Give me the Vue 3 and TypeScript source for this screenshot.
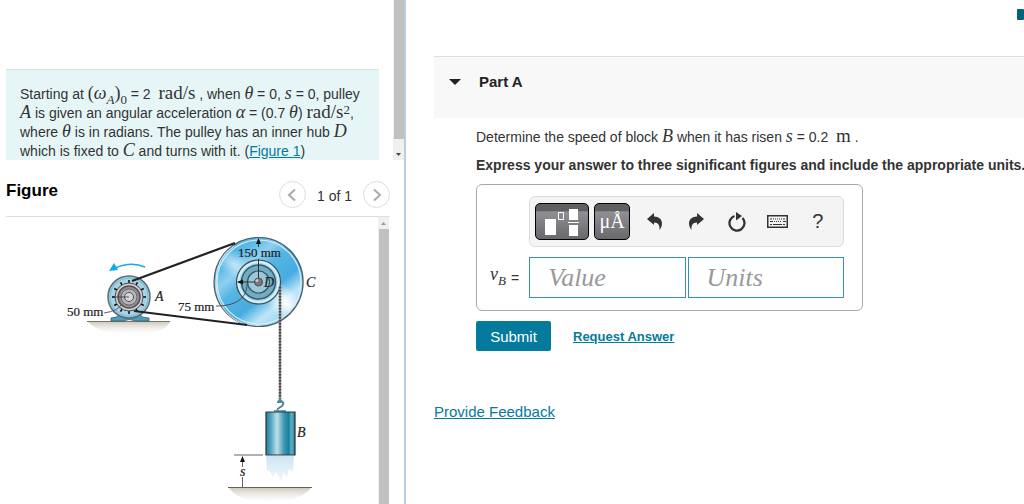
<script setup lang="ts">
import { ref } from 'vue'

const value = ref('')
const units = ref('')
const open = ref(true)

interface Mark {
  x1: number
  y1: number
  x2: number
  y2: number
}

const bolts: Mark[] = Array.from({ length: 12 }, (_, i) => {
  const a = (i * Math.PI) / 6
  const at = (r: number, f: (n: number) => number) => Math.round(r * f(a) * 10) / 10
  return {
    x1: 129 + at(14, Math.cos),
    y1: 297 + at(14, Math.sin),
    x2: 129 + at(17, Math.cos),
    y2: 297 + at(17, Math.sin),
  }
})
</script>

<template>
  <div class="page">
    <aside class="left">
      <section class="problem">
        <div class="problem-scroll">
          <p class="statement">
            <span class="line">Starting at <span class="m">(<i>ω</i><sub><i>A</i></sub>)<sub>0</sub></span> = 2 &nbsp;<span class="m unit">rad/s</span> , when <i class="m">θ</i> = 0, <i class="m">s</i> = 0, pulley</span>
            <span class="line"><i class="m">A</i> is given an angular acceleration <i class="m">α</i> = (0.7 <i class="m">θ</i>) <span class="m unit">rad/s<sup>2</sup></span>,</span>
            <span class="line">where <i class="m">θ</i> is in radians. The pulley has an inner hub <i class="m">D</i></span>
            <span class="line">which is fixed to <i class="m">C</i> and turns with it. (<a href="#figure">Figure 1</a>)</span>
          </p>
        </div>
        <div class="bar bar-top" aria-hidden="true">
          <span class="thumb"></span>
          <svg class="arrow" viewBox="0 0 11 21"><path d="M3 14h5L5.500 17z" fill="#444" /></svg>
        </div>
      </section>

      <header class="figure-head">
        <h2>Figure</h2>
        <nav class="pager" aria-label="Figure pages">
          <button type="button" class="round" aria-label="Previous figure">
            <svg width="12" height="14" viewBox="0 0 12 14"><path d="M9 1.500 3 7l6 5.500" /></svg>
          </button>
          <span class="count">1 of 1</span>
          <button type="button" class="round" aria-label="Next figure">
            <svg width="12" height="14" viewBox="0 0 12 14"><path d="M3 1.500 9 7l-6 5.500" /></svg>
          </button>
        </nav>
      </header>

      <section id="figure" class="figure-body">
        <svg class="drawing" viewBox="0 217 378 287" role="img" aria-label="Pulley A driving pulley C, whose hub D lifts block B">
          <defs>
            <linearGradient id="disc" x1="0.1" y1="0" x2="0.9" y2="1">
              <stop offset="0" stop-color="#49b0e3" />
              <stop offset="0.2" stop-color="#5bb9e8" />
              <stop offset="0.32" stop-color="#8fd0f0" />
              <stop offset="0.43" stop-color="#55b5e5" />
              <stop offset="0.62" stop-color="#48ace0" />
              <stop offset="0.76" stop-color="#bfe5f8" />
              <stop offset="0.88" stop-color="#9fd7f3" />
              <stop offset="1" stop-color="#49aee2" />
            </linearGradient>
            <radialGradient id="glow">
              <stop offset="0" stop-color="#fff" stop-opacity="0.95" />
              <stop offset="1" stop-color="#fff" stop-opacity="0" />
            </radialGradient>
            <linearGradient id="block">
              <stop offset="0" stop-color="#267f9c" />
              <stop offset="0.15" stop-color="#4aa0b9" />
              <stop offset="0.38" stop-color="#c1dfeb" />
              <stop offset="0.62" stop-color="#3e98b2" />
              <stop offset="0.78" stop-color="#16809c" />
              <stop offset="0.88" stop-color="#60b0c5" />
              <stop offset="1" stop-color="#267c96" />
            </linearGradient>
            <linearGradient id="trail" x2="0" y2="1">
              <stop offset="0" stop-color="#cce5f2" />
              <stop offset="1" stop-color="#e3f2f9" stop-opacity="0.6" />
            </linearGradient>
            <linearGradient id="soil" x2="0" y2="1">
              <stop offset="0" stop-color="#cfcabc" />
              <stop offset="1" stop-color="#f6f4ef" stop-opacity="0" />
            </linearGradient>
            <clipPath id="rim"><circle cx="259" cy="282" r="44" /></clipPath>
          </defs>

          <path d="M88 322h82q-5 10-28 12-37 4-54-12z" fill="url(#soil)" />
          <path d="M87 321.500h83" stroke="#77746c" stroke-width="1.200" />
          <path d="M111 321v-3l6-1 4-6h17l4 6 7 1v3h-13q-7-3-13 0z" fill="#4f9db9" stroke="#345b6a" stroke-width="0.800" />
          <circle cx="129" cy="297" r="21" fill="#a7d3e6" stroke="#526e7a" stroke-width="1.500" />
          <circle cx="129" cy="297" r="19" fill="none" stroke="#7eb4cc" />
          <path v-for="(b, i) in bolts" :key="i" :d="`M${b.x1} ${b.y1}L${b.x2} ${b.y2}`" stroke="#111" stroke-width="1.600" />
          <circle cx="129" cy="297" r="14" fill="#d4d2d1" stroke="#4d4b4c" />
          <circle cx="129" cy="297" r="11" fill="#918f92" stroke="#565357" stroke-width="1.500" />
          <circle cx="129" cy="297" r="8" fill="#b7b5b8" stroke="#6c6a6e" />
          <circle cx="129" cy="297" r="4.500" fill="#d8d7da" stroke="#555358" />
          <path d="M113 297h16" stroke="#333" stroke-width="0.800" />
          <path d="M104 313q14-2 18-9" fill="none" stroke="#555" stroke-width="0.900" />
          <path d="M145 267q-14-6-30 1" fill="none" stroke="#16a9e8" stroke-width="1.500" />
          <path d="m109 271 5-8 4 7z" fill="#16a9e8" />

          <circle cx="259" cy="282" r="45" fill="url(#disc)" />
          <g clip-path="url(#rim)">
            <ellipse cx="234" cy="264" rx="22" ry="12" transform="rotate(35 234 264)" fill="url(#glow)" opacity="0.6" />
            <ellipse cx="286" cy="303" rx="28" ry="15" transform="rotate(42 286 303)" fill="url(#glow)" />
          </g>
          <circle cx="259" cy="282" r="42" fill="none" stroke="#d2edfa" stroke-width="1.200" />
          <circle cx="258.500" cy="282" r="44.500" fill="none" stroke="#505d64" stroke-width="1.200" />
          <path d="M234 246q-18 11-18 36c0 22 12 37 31 43" fill="none" stroke="#e5eef1" />
          <circle cx="258.500" cy="282" r="22" fill="#a9d4e5" stroke="#3a4b54" stroke-width="1.200" />
          <circle cx="258.500" cy="282" r="20" fill="none" stroke="#d9eff8" stroke-width="2" />
          <circle cx="258.500" cy="282" r="17" fill="#71adc2" stroke="#315e70" stroke-width="1.500" />
          <circle cx="258.500" cy="282" r="11" fill="#9ac8d9" stroke="#34535f" stroke-width="1.200" />
          <path d="M258.500 240v7m0 12v23M238 282h18" stroke="#222" stroke-width="0.900" />
          <path d="m258.500 238 2.500 6h-5zM237 282l6-2.500v5z" fill="#111" />
          <path d="M216 306c19 0 31-7 31-22" fill="none" stroke="#444" stroke-width="0.900" />
          <circle cx="258.500" cy="282" r="4" fill="#77787a" stroke="#4c4c4e" />
          <circle cx="257" cy="280.500" r="1.500" fill="#c8c8ca" />

          <path d="m132 281 103-38M134 311l113 14" fill="none" stroke="#222" stroke-width="2.200" />
          <path d="M280 287v113" stroke="#8c8888" stroke-width="2.400" />
          <path d="M280 287v113" stroke="#474444" stroke-width="2.400" stroke-dasharray="1.500 1.500" />

          <path d="M280 398v5m-2 0q0-3 3-2 4 2 1 5l-3 2q-3 2 0 3" fill="none" stroke="#4b899b" stroke-width="2" />
          <path d="M274 410h12v2h-12z" fill="#60a7b8" />
          <path d="M266 412h29v43h-29z" fill="url(#block)" stroke="#28343a" stroke-width="1.200" />
          <path d="M266 456h28l-1 16-4-3-2 8-4-5-1 10-6-10-3 5-4-7-2 2z" fill="url(#trail)" />

          <path d="M234 455h29M242.500 457v10m0 10v10" stroke="#555" stroke-width="0.900" />
          <path d="m242.500 456 2.500 6h-5z" fill="#111" />
          <path d="M229 488h82q-10 13-42 15-29 0-40-15z" fill="url(#soil)" />
          <path d="M228 487.500h84" stroke="#65625c" stroke-width="1.200" />

          <g class="labels">
            <text x="238" y="257">150 mm</text>
            <text x="178" y="311">75 mm</text>
            <text x="67" y="316">50 mm</text>
            <text x="155" y="301" class="it">A</text>
            <text x="306" y="287" class="it">C</text>
            <text x="264" y="287" class="it">D</text>
            <text x="297" y="437" class="it">B</text>
            <text x="240" y="476" class="it">s</text>
          </g>
        </svg>
        <div class="bar bar-figure" aria-hidden="true">
          <svg class="arrow" viewBox="0 0 11 12"><path d="M3 8h5L5.500 5z" fill="#999" /></svg>
          <span class="thumb"></span>
        </div>
      </section>
    </aside>

    <main class="right">
      <span class="flag" aria-hidden="true"></span>
      <header class="part">
        <button type="button" class="toggle" :aria-expanded="open" @click="open = !open">
          <svg width="12" height="8" viewBox="0 0 12 8" aria-hidden="true"><path d="M0 1h12L6 7z" fill="#222" /></svg>
          <span>Part A</span>
        </button>
      </header>

      <div v-show="open" class="question">
        <p class="ask">Determine the speed of block <i class="m">B</i> when it has risen <i class="m">s</i> = 0.2 &nbsp;<span class="m unit">m</span> .</p>
        <p class="hint">Express your answer to three significant figures and include the appropriate units.</p>

        <form class="answer" @submit.prevent>
          <div class="entry">
            <div class="tools" role="toolbar" aria-label="Math tools">
              <button type="button" class="dark wide" aria-label="Templates">
                <svg width="36" height="30" viewBox="0 0 36 30">
                  <path d="M1 12h11v16H1zM25 2h9v11h-9zM25 18h9v11h-9zM24 15h11v1H24z" fill="#fff" />
                  <path d="M14.500 5.500h5v7h-5z" fill="none" stroke="#fff" />
                </svg>
              </button>
              <button type="button" class="dark narrow" aria-label="Units and symbols">μÅ</button>
              <button type="button" class="plain" aria-label="Undo">
                <svg width="16" height="18" viewBox="0 0 16 18"><path d="M0 6 7 0v3.500c5 0 8 3 8 7 0 2.500-1 4.500-2.500 6.500.5-4-1-7.500-5.500-7.500V12z" fill="#333" /></svg>
              </button>
              <button type="button" class="plain" aria-label="Redo">
                <svg width="16" height="18" viewBox="0 0 16 18"><path d="M16 6 9 0v3.500c-5 0-8 3-8 7 0 2.500 1 4.500 2.500 6.500-.5-4 1-7.500 5.500-7.500V12z" fill="#333" /></svg>
              </button>
              <button type="button" class="plain" aria-label="Reset">
                <svg width="18" height="20" viewBox="0 0 18 20"><path d="M6.500 4A7.500 7.500 0 1 0 14.500 6" fill="none" stroke="#333" stroke-width="2.300" /><path d="m8 0 6 4-6 4.500z" fill="#333" /></svg>
              </button>
              <button type="button" class="plain" aria-label="Keyboard">
                <svg width="21" height="13" viewBox="0 0 21 13"><path d="M.75.750h19.500v11.500H.75z" fill="none" stroke="#333" stroke-width="1.500" /><path d="M3 4h2m1 0h1m1 0h1m1 0h1m1 0h1m1 0h1m1 0h2M3 6.500h3m1 0h1m1 0h1m1 0h1m1 0h1m2 0h3M3 9.500h2m1 0h9m1 0h2" stroke="#333" stroke-width="1.200" /></svg>
              </button>
              <button type="button" class="plain help" aria-label="Help">?</button>
            </div>
            <label class="symbol" for="value"><span class="m"><i>v</i><sub><i>B</i></sub></span> =</label>
            <div class="fields">
              <input id="value" v-model="value" type="text" placeholder="Value" />
              <input v-model="units" type="text" placeholder="Units" aria-label="Units" />
            </div>
          </div>
          <div class="actions">
            <button type="submit" class="submit">Submit</button>
            <a href="#request" class="request">Request Answer</a>
          </div>
        </form>
      </div>

      <a href="#feedback" class="feedback">Provide Feedback</a>
    </main>
  </div>
</template>

<style>
body {
  margin: 0;
  background: #fff;
}
</style>

<style scoped>
* {
  box-sizing: border-box;
}
.page {
  display: grid;
  grid-template-columns: 406fr 618fr;
  min-height: 100vh;
  font-family: "Liberation Sans", Arial, sans-serif;
  font-size: 14px;
  color: #333;
}
button {
  font: inherit;
  color: inherit;
  border: 0;
  padding: 0;
  background: none;
  cursor: pointer;
}
a {
  color: #047a9c;
}
.m {
  font-family: "Liberation Serif", "Times New Roman", serif;
  font-size: 18px;
  line-height: 1px;
}
.unit {
  font-size: 19px;
}
.m sub,
.m sup {
  font-size: 13px;
  line-height: 1px;
}
.m sup {
  vertical-align: 4px;
}
.left {
  display: flex;
  flex-direction: column;
  min-width: 0;
  border-right: 2px solid #b9cde0;
}
.problem {
  display: flex;
  height: 160px;
}
.problem-scroll {
  flex: 1;
  min-width: 0;
  display: flex;
  padding: 69px 14px 0 6px;
}
.statement {
  flex: 1;
  margin: 0;
  padding: 15px 0 0 14px;
  border-top: 1px solid #d9e4e5;
  background: #e6f6f7;
  line-height: 19px;
}
.line {
  display: block;
  white-space: nowrap;
}
.bar {
  display: flex;
  flex-direction: column;
  width: 11px;
  background: #f0f0f0;
}
.thumb {
  flex: 1;
  margin-left: 1px;
  background: #c1c1c1;
}
.arrow {
  display: block;
  width: 11px;
}
.bar-top .arrow {
  height: 21px;
}
.bar-figure .arrow {
  height: 12px;
}
.figure-head {
  display: flex;
  justify-content: space-between;
  align-items: flex-start;
  height: 57px;
  margin: 0 14px 0 6px;
  border-bottom: 1px solid #ddd;
}
h2 {
  margin: 21px 0 0;
  font-size: 17px;
  line-height: 20px;
  color: #000;
}
.pager {
  display: flex;
  align-items: center;
  gap: 11px;
  padding-top: 21px;
}
.round {
  display: flex;
  align-items: center;
  justify-content: center;
  width: 27px;
  height: 27px;
  border: 1px solid #ddd;
  border-radius: 50%;
}
.round path {
  fill: none;
  stroke: #aaa;
  stroke-width: 2;
}
.count {
  padding-top: 3px;
}
.figure-body {
  flex: 1;
  display: flex;
  margin-right: 15px;
}
.drawing {
  display: block;
  flex: 1;
  min-width: 0;
  align-self: flex-start;
}
.labels {
  font-family: "Liberation Serif", "Times New Roman", serif;
  font-size: 13px;
  fill: #222;
  stroke: #222;
  stroke-width: 0.2px;
}
.it {
  font-size: 14px;
  font-style: italic;
}
.right {
  position: relative;
  min-width: 0;
  padding: 56px 0 0 28px;
}
.flag {
  position: absolute;
  top: 9px;
  right: 0;
  width: 7px;
  height: 11px;
  border-radius: 1px;
  background: #00637c;
}
.part {
  padding: 15px;
  height: 62px;
  border-top: 1px solid #ddd;
  background: #f8f8f8;
}
.toggle {
  display: flex;
  align-items: center;
  gap: 18px;
  line-height: 20px;
  font-size: 15px;
  font-weight: bold;
  color: #222;
}
.question {
  padding: 9px 0 0 42px;
}
p {
  margin: 0;
  line-height: 20px;
  white-space: nowrap;
}
.hint {
  margin-top: 8px;
  font-weight: bold;
}
.entry {
  display: grid;
  grid-template-columns: auto 1fr;
  gap: 10px;
  align-items: center;
  max-width: 387px;
  margin-top: 9px;
  padding: 11px 18px 12px 13px;
  border: 1px solid #aaa;
  border-radius: 6px;
}
.tools {
  grid-column: 2;
  display: flex;
  align-items: center;
  height: 51px;
  padding: 0 5px;
  border: 1px solid #ddd;
  border-radius: 6px;
  background: #f4f4f4;
}
.dark {
  display: flex;
  align-items: center;
  justify-content: center;
  height: 37px;
  border: 1px solid #000;
  border-radius: 5px;
  background: linear-gradient(#606062 0 20%, #8f8f96 22%, #69696b 100%);
  color: #fff;
}
.wide {
  width: 54px;
  margin-right: 5px;
}
.narrow {
  width: 36px;
  margin-right: 5px;
  font-family: "Liberation Serif", serif;
  font-size: 20px;
}
.plain {
  flex: 1;
  display: flex;
  align-items: center;
  justify-content: center;
  height: 36px;
}
.help {
  font-size: 20px;
}
.symbol {
  display: flex;
  align-items: center;
  gap: 5px;
  white-space: nowrap;
}
.fields {
  display: grid;
  grid-template-columns: 1fr 1fr;
  gap: 2px;
}
input {
  min-width: 0;
  height: 41px;
  padding: 0 18px;
  border: 1px solid #3095af;
  border-radius: 0;
  font: italic 26px "Liberation Serif", "Times New Roman", serif;
}
input::placeholder {
  color: #999;
  opacity: 1;
}
.actions {
  display: flex;
  align-items: center;
  gap: 22px;
  margin-top: 10px;
}
.submit {
  width: 75px;
  height: 30px;
  border-radius: 2px;
  background: #047a9c;
  color: #fff;
  font-size: 15px;
}
.request {
  font-size: 13px;
  font-weight: bold;
}
.feedback {
  display: inline-block;
  margin-top: 51px;
  line-height: 20px;
  font-size: 15px;
}
</style>
